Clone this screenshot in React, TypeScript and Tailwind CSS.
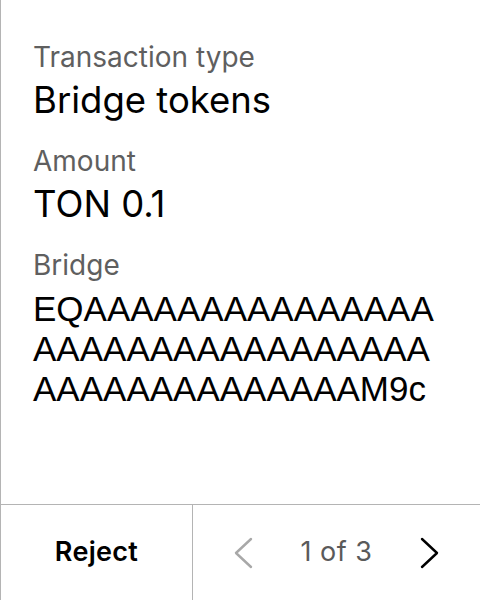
import React from 'react'

const address = 'EQ' + 'A'.repeat(46) + 'M9c'

function Chevron({ dir, className }: { dir: 'left' | 'right'; className?: string }) {
  const points = dir === 'left' ? '18,2 3,16 18,30' : '2,2 17,16 2,30'
  return (
    <svg width="20" height="32" viewBox="0 0 20 32" fill="none" className={className}>
      <polyline points={points} stroke="currentColor" strokeWidth="2.4" strokeLinecap="round" strokeLinejoin="round" />
    </svg>
  )
}

export default function App() {
  return (
    <div className="h-[600px] w-[480px] flex flex-col bg-white border-l border-[#b4b4b4] font-['Inter',sans-serif] text-black">
      <div className="flex-1 flex flex-col pt-[40px] pl-[32px] pr-[36px]">
        <div className="text-[28px] leading-[34px] text-[#5f5f5f]">Transaction type</div>
        <div className="mt-[6px] text-[36.5px] leading-[40px]">Bridge tokens</div>

        <div className="mt-[24px] text-[28px] leading-[34px] text-[#5f5f5f]">Amount</div>
        <div className="mt-[6px] text-[36.5px] leading-[40px]">TON 0.1</div>

        <div className="mt-[24px] text-[28px] leading-[34px] text-[#5f5f5f]">Bridge</div>
        <div className="mt-[7px] text-[35px] leading-[40px] break-all font-['Liberation_Sans',Arial,sans-serif]">
          {address}
        </div>
      </div>
      <div className="h-[96px] flex border-t border-[#b4b4b4]">
        <button className="w-[192px] border-r border-[#b4b4b4] text-[27px] font-semibold tracking-[0.3px]">
          Reject
        </button>
        <div className="flex-1 flex items-center justify-between px-[40px]">
          <Chevron dir="left" className="text-[#a8a8a8]" />
          <span className="text-[27px] tracking-[0.5px] text-[#5a5a5a]">1 of 3</span>
          <Chevron dir="right" className="text-black" />
        </div>
      </div>
    </div>
  )
}
